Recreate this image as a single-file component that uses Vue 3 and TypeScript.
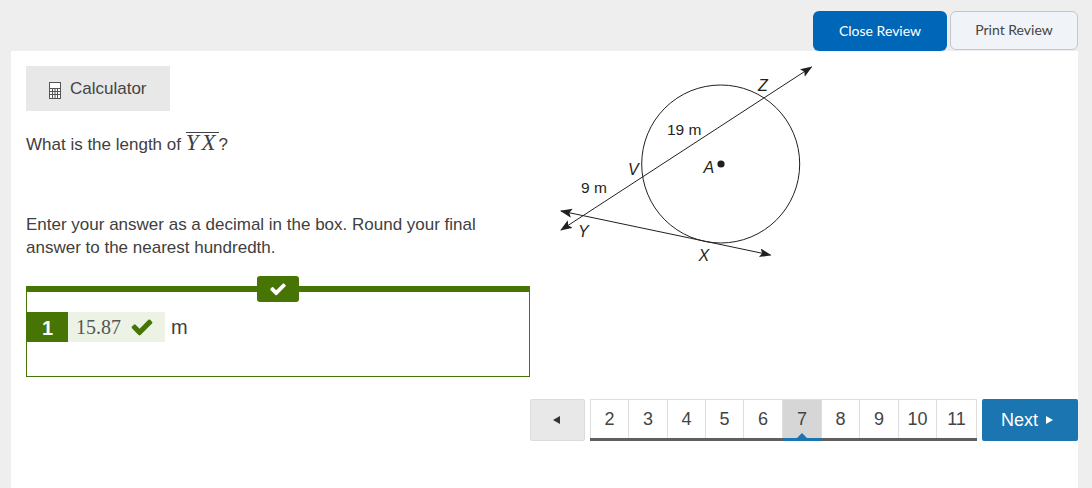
<template>
  <div class="page">
    <div class="top-bar">
      <button class="btn-close">Close Review</button>
      <button class="btn-print">Print Review</button>
    </div>

    <main class="panel">
      <div class="columns">
        <section class="question">
          <div class="calc-btn">
            <svg class="calc-icon" width="12" height="17" viewBox="0 0 12 17">
              <rect x="0.5" y="0.5" width="11" height="16" fill="#fff" stroke="#555" />
              <path d="M0.5 6.5H11.5M0.5 9.5H11.5M0.5 12.5H11.5M3.5 6.5V16.5M6 6.5V16.5M8.5 6.5V16.5" stroke="#555" fill="none" />
            </svg>
            <span>Calculator</span>
          </div>

          <p class="prompt">
            What is the length of <span class="math"><span class="overline">YX</span></span>?
          </p>
          <p class="instructions">
            Enter your answer as a decimal in the box. Round your final answer to the nearest hundredth.
          </p>

          <div class="answer-box">
            <div class="answer-flag">
              <svg width="18" height="18" viewBox="0 0 1792 1792"><path :d="checkPath" fill="#fff" /></svg>
            </div>
            <div class="answer-row">
              <span class="answer-num">1</span>
              <span class="answer-value">
                15.87
                <svg width="24" height="24" viewBox="0 0 1792 1792"><path :d="checkPath" fill="#467405" /></svg>
              </span>
              <span class="unit">m</span>
            </div>
          </div>
        </section>

        <figure class="diagram">
          <svg width="270" height="215" viewBox="0 0 270 215">
            <defs>
              <marker id="arrow" markerWidth="13" markerHeight="10" refX="11" refY="4.5" orient="auto-start-reverse" markerUnits="userSpaceOnUse">
                <path d="M0 0L12 4.5L0 9L2.5 4.5Z" fill="#231f20" />
              </marker>
            </defs>
            <circle cx="170.7" cy="109" r="79" fill="none" stroke="#231f20" stroke-width="1" />
            <circle cx="171" cy="109" r="3.6" fill="#231f20" />
            <line x1="11" y1="175" x2="261.5" y2="12" stroke="#231f20" stroke-width="1" marker-start="url(#arrow)" marker-end="url(#arrow)" />
            <line x1="11" y1="156" x2="220.5" y2="200" stroke="#231f20" stroke-width="1" marker-start="url(#arrow)" marker-end="url(#arrow)" />
            <text class="lbl" x="117" y="80">19 m</text>
            <text class="lbl" x="31" y="138">9 m</text>
            <text class="lbl ital" x="208" y="35.5">Z</text>
            <text class="lbl ital" x="78" y="120">V</text>
            <text class="lbl ital" x="153.5" y="118">A</text>
            <text class="lbl ital" x="28" y="182">Y</text>
            <text class="lbl ital" x="148.5" y="206">X</text>
          </svg>
        </figure>
      </div>

      <nav class="pager">
        <button class="prev"><span class="tri-left"></span></button>
        <div class="pages">
          <span v-for="n in pages" :key="n" class="page-cell" :class="{ current: n === 7 }">{{ n }}</span>
        </div>
        <button class="next">Next <span class="tri-right"></span></button>
      </nav>
    </main>
  </div>
</template>

<script setup lang="ts">
const pages: number[] = [2, 3, 4, 5, 6, 7, 8, 9, 10, 11]

// font-awesome style check mark
const checkPath =
  'M1671 566q0 40-28 68l-724 724-136 136q-28 28-68 28t-68-28l-136-136-362-362q-28-28-28-68t28-68l136-136q28-28 68-28t68 28l294 295 656-657q28-28 68-28t68 28l136 136q28 28 28 68z'
</script>

<style>
html,
body {
  margin: 0;
  background: #eeeeee;
}
</style>

<style scoped>
.page {
  height: 488px;
  overflow: hidden;
  display: flex;
  flex-direction: column;
  font-family: "Liberation Sans", Arial, sans-serif;
  color: #333;
}

.top-bar {
  display: flex;
  justify-content: flex-end;
  gap: 3px;
  height: 40px;
  padding: 11px 14px 0 0;
}

.top-bar button {
  font-family: Lato, sans-serif;
  font-size: 14px;
  height: 40px;
  padding-bottom: 3px;
  border-radius: 6px;
  cursor: pointer;
}

.btn-close {
  width: 134px;
  background: #0067b8;
  color: #fff;
  border: none;
  position: relative;
  z-index: 1;
}

.btn-print {
  width: 128px;
  background: #f0f3f8;
  color: #444;
  border: 1px solid #c4c6ca;
  height: 39px !important;
}

.panel {
  flex: 1;
  margin: 0 14px 0 11px;
  padding: 15px 0 0 15px;
  background: #fff;
}

.columns {
  display: flex;
}

.question {
  width: 504px;
}

.calc-btn {
  display: flex;
  align-items: center;
  width: 144px;
  height: 45px;
  padding-left: 23px;
  box-sizing: border-box;
  background: #e8e8e8;
  font-size: 17px;
  color: #444;
}

.calc-icon {
  margin: 4px 9px 0 0;
}

.prompt,
.instructions {
  margin: 0;
  font-size: 17px;
  line-height: 23px;
  color: #404040;
}

.prompt {
  margin-top: 20px;
}

.instructions {
  margin-top: 57px;
  width: 480px;
}

.math {
  font-family: "Liberation Serif", serif;
  font-style: italic;
  font-size: 23px;
}

.overline {
  display: inline-block;
  letter-spacing: 3px;
  line-height: 20px;
  border-top: 1px solid #404040;
}

.answer-box {
  position: relative;
  margin-top: 27px;
  height: 84px;
  border: 1px solid #467405;
  border-top: 6px solid #467405;
}

.answer-flag {
  position: absolute;
  top: -16px;
  left: 230px;
  width: 42px;
  height: 26px;
  display: flex;
  align-items: center;
  justify-content: center;
  background: #467405;
  border-radius: 3px;
}

.answer-row {
  display: flex;
  align-items: center;
  height: 30px;
  margin-top: 20px;
}

.answer-num {
  width: 41px;
  height: 30px;
  line-height: 32px;
  text-align: center;
  background: #467405;
  color: #fff;
  font-size: 20px;
  font-weight: 700;
}

.answer-value {
  display: flex;
  align-items: center;
  gap: 9px;
  width: 97px;
  height: 30px;
  padding-left: 8px;
  box-sizing: border-box;
  background: #ecf3e5;
  color: #555;
  font-family: "Liberation Serif", serif;
  font-size: 20px;
}

.unit {
  margin-left: 6px;
  font-size: 20px;
  color: #404040;
}

.diagram {
  margin: -11px 0 0 20px;
  height: 215px;
}

.lbl {
  font-size: 15.5px;
  fill: #231f20;
}

.ital {
  font-style: italic;
  font-size: 16px;
}

.pager {
  display: flex;
  gap: 5px;
  margin-top: 22px;
  margin-left: 504px;
  height: 42px;
}

.prev {
  width: 55px;
  height: 42px;
  background: #e8e8e8;
  border: 1px solid #dcdcdc;
  border-radius: 2px;
  display: flex;
  align-items: center;
  justify-content: center;
}

.tri-left {
  margin-right: 3px;
  border: 4px solid transparent;
  border-left: 0;
  border-right: 7px solid #333;
}

.pages {
  display: grid;
  grid-template-columns: 39px 39px 38px 38px 39px 39px 38px 39px 38px 40px;
  width: 387px;
  height: 42px;
  box-sizing: border-box;
  border-bottom: 3px solid #5f5f5f;
}

.page-cell {
  position: relative;
  display: flex;
  align-items: center;
  justify-content: center;
  box-sizing: border-box;
  font-size: 18px;
  color: #444;
  border: 1px solid #dedede;
  border-left: 0;
  border-bottom: 0;
}

.page-cell:first-child {
  border-left: 1px solid #dedede;
}

.page-cell.current {
  background: #d6d6d6;
}

.page-cell.current::after {
  content: "";
  position: absolute;
  left: 0;
  right: 0;
  bottom: -3px;
  height: 3px;
  background: #1a75b0;
}

.page-cell.current::before {
  content: "";
  position: absolute;
  left: 50%;
  bottom: 0;
  margin-left: -5px;
  border: 5px solid transparent;
  border-top: 0;
  border-bottom: 5px solid #1a75b0;
}

.next {
  width: 96px;
  height: 42px;
  padding: 0 0 0 19px;
  text-align: left;
  background: #1a75b0;
  color: #fff;
  border: none;
  border-radius: 2px;
  font-family: "Liberation Sans", Arial, sans-serif;
  font-size: 18px;
}

.tri-right {
  display: inline-block;
  margin-left: 3px;
  vertical-align: 2px;
  border: 4px solid transparent;
  border-right: 0;
  border-left: 7px solid #fff;
}
</style>
